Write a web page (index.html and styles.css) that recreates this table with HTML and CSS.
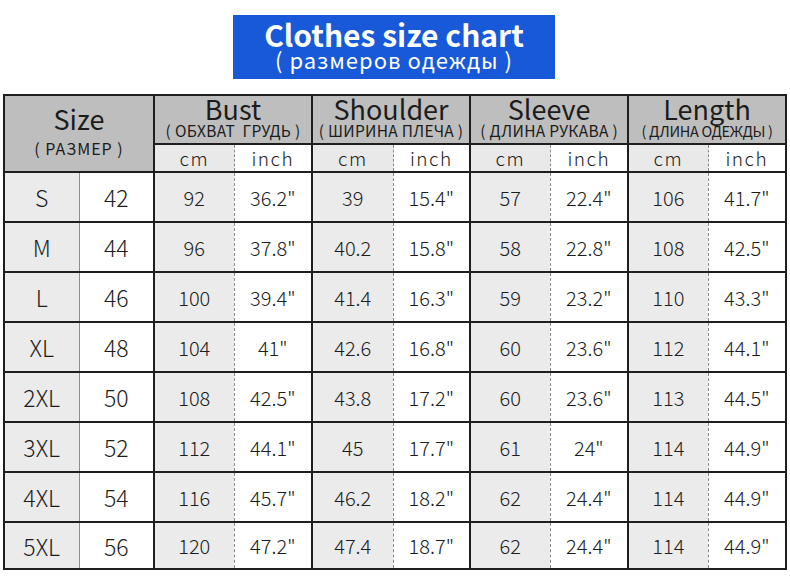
FILE: index.html
```html
<!DOCTYPE html>
<html lang="en">
<head>
<meta charset="utf-8">
<title>Clothes size chart</title>
<link rel="stylesheet" href="styles.css">
</head>
<body>
<div class="page">
  <div class="banner">
    <div class="banner-title">Clothes size chart</div>
    <div class="banner-sub">( размеров одежды )</div>
  </div>
  <table class="chart">
    <colgroup>
      <col class="w75"><col class="w75"><col class="w80"><col class="w78"><col class="w81"><col class="w77"><col class="w80"><col class="w78"><col class="w80"><col class="w78">
    </colgroup>
    <thead>
      <tr class="head-top">
        <th class="size-head" colspan="2" rowspan="2"><div class="big">Size</div><div class="sub sub-size">( РАЗМЕР )</div></th>
        <th class="grp" colspan="2"><div class="big">Bust</div><div class="sub">( ОБХВАТ&nbsp; ГРУДЬ )</div></th>
        <th class="grp" colspan="2"><div class="big">Shoulder</div><div class="sub">( ШИРИНА ПЛЕЧА )</div></th>
        <th class="grp" colspan="2"><div class="big">Sleeve</div><div class="sub">( ДЛИНА РУКАВА )</div></th>
        <th class="grp" colspan="2"><div class="big">Length</div><div class="sub sub-narrow">( ДЛИНА ОДЕЖДЫ )</div></th>
      </tr>
      <tr class="head-unit">
        <th class="cm">cm</th><th class="in">inch</th>
        <th class="cm">cm</th><th class="in">inch</th>
        <th class="cm">cm</th><th class="in">inch</th>
        <th class="cm">cm</th><th class="in">inch</th>
      </tr>
    </thead>
    <tbody>
      <tr><td class="sz">S</td><td class="eu">42</td><td class="cm">92</td><td class="in">36.2"</td><td class="cm">39</td><td class="in">15.4"</td><td class="cm">57</td><td class="in">22.4"</td><td class="cm">106</td><td class="in">41.7"</td></tr>
      <tr><td class="sz">M</td><td class="eu">44</td><td class="cm">96</td><td class="in">37.8"</td><td class="cm">40.2</td><td class="in">15.8"</td><td class="cm">58</td><td class="in">22.8"</td><td class="cm">108</td><td class="in">42.5"</td></tr>
      <tr><td class="sz">L</td><td class="eu">46</td><td class="cm">100</td><td class="in">39.4"</td><td class="cm">41.4</td><td class="in">16.3"</td><td class="cm">59</td><td class="in">23.2"</td><td class="cm">110</td><td class="in">43.3"</td></tr>
      <tr><td class="sz">XL</td><td class="eu">48</td><td class="cm">104</td><td class="in">41"</td><td class="cm">42.6</td><td class="in">16.8"</td><td class="cm">60</td><td class="in">23.6"</td><td class="cm">112</td><td class="in">44.1"</td></tr>
      <tr><td class="sz">2XL</td><td class="eu">50</td><td class="cm">108</td><td class="in">42.5"</td><td class="cm">43.8</td><td class="in">17.2"</td><td class="cm">60</td><td class="in">23.6"</td><td class="cm">113</td><td class="in">44.5"</td></tr>
      <tr><td class="sz">3XL</td><td class="eu">52</td><td class="cm">112</td><td class="in">44.1"</td><td class="cm">45</td><td class="in">17.7"</td><td class="cm">61</td><td class="in">24"</td><td class="cm">114</td><td class="in">44.9"</td></tr>
      <tr><td class="sz">4XL</td><td class="eu">54</td><td class="cm">116</td><td class="in">45.7"</td><td class="cm">46.2</td><td class="in">18.2"</td><td class="cm">62</td><td class="in">24.4"</td><td class="cm">114</td><td class="in">44.9"</td></tr>
      <tr class="last"><td class="sz">5XL</td><td class="eu">56</td><td class="cm">120</td><td class="in">47.2"</td><td class="cm">47.4</td><td class="in">18.7"</td><td class="cm">62</td><td class="in">24.4"</td><td class="cm">114</td><td class="in">44.9"</td></tr>
    </tbody>
  </table>
</div>
</body>
</html>
```

FILE: styles.css
```css
html, body {
  margin: 0;
  padding: 0;
  background: #ffffff;
}

body {
  font-family: "Noto Sans CJK SC", "Noto Sans", sans-serif;
  color: #1c1c1c;
}

.page {
  width: 790px;
  height: 587px;
  padding-top: 15px;
  box-sizing: border-box;
  overflow: hidden;
}

.banner {
  width: 322px;
  height: 64px;
  margin: 0 auto 0 233px;
  background: #1859d9;
  color: #ffffff;
  text-align: center;
  box-sizing: border-box;
  padding-top: 4px;
}

.banner-title {
  font-size: 30px;
  font-weight: 700;
  line-height: 30px;
}

.banner-sub {
  font-size: 22px;
  line-height: 20px;
  letter-spacing: 1px;
}

.chart {
  margin: 15px 0 0 3px;
  width: 782px;
  table-layout: fixed;
  border-collapse: collapse;
  border: 2px solid #1e1e1e;
}

.w75 { width: 75px; }
.w77 { width: 77px; }
.w78 { width: 78px; }
.w80 { width: 80px; }
.w81 { width: 81px; }

.chart th,
.chart td {
  padding: 0;
  text-align: center;
  vertical-align: middle;
  font-weight: 400;
  white-space: nowrap;
}

.head-top {
  height: 49px;
}

.head-top th {
  background: #bebebe;
  border: 2px solid #1e1e1e;
  vertical-align: top;
}

.big {
  font-size: 27px;
  line-height: 26px;
}

.sub {
  font-size: 15.5px;
  line-height: 17px;
  letter-spacing: 0.3px;
}

.sub-narrow {
  font-size: 14.5px;
  letter-spacing: -0.3px;
}

.size-head {
  padding-top: 8px !important;
}

.size-head .big {
  line-height: 30px;
}

.sub-size {
  font-size: 16px;
  line-height: 28px;
  letter-spacing: 1px;
}

.head-unit {
  height: 28px;
}

.head-unit th {
  font-size: 19px;
  font-weight: 300;
  letter-spacing: 1.5px;
  line-height: 20px;
  border-bottom: 2px solid #1e1e1e;
}

.chart tbody tr {
  height: 50px;
}

.chart tbody tr.last {
  height: 47px;
}

.chart tbody td {
  border-top: 2px solid #1e1e1e;
  border-bottom: 2px solid #1e1e1e;
  font-size: 20px;
  font-weight: 300;
}

.cm {
  background: #ebebeb;
  border-left: 2px solid #1e1e1e;
  border-right: 1px dashed #8a8a8a;
}

.in {
  background: #ffffff;
  border-right: 2px solid #1e1e1e;
}

.head-unit .cm {
  background: #e9e9e9;
}

.chart tbody .sz {
  background: #ebebeb;
  border-right: 1px solid #8e8e8e;
  font-size: 23px;
}

.chart tbody .eu {
  background: #ffffff;
  border-right: 2px solid #1e1e1e;
  font-size: 23px;
}
```
